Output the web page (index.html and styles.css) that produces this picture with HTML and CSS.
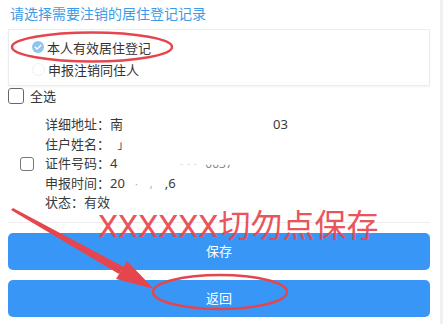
FILE: index.html
```html
<!DOCTYPE html>
<html lang="zh-CN">
<head>
  <meta charset="UTF-8" />
  <title>注销居住登记</title>
  <meta name="viewport" content="width=device-width, initial-scale=1.0"/>
  <link rel="stylesheet" href="styles.css">
</head>
<body>
  <div class="screen">
    <div class="page">

      <!-- Title -->
      <div class="page-title">请选择需要注销的居住登记记录</div>

      <!-- Options -->
      <div class="options">
        <div class="option">
          <span class="radio checked">
            <svg viewBox="0 0 12 12" width="12" height="12"><circle cx="6" cy="6" r="6" fill="#8fc4ef"/><path d="M3.2 6.2 L5.2 8.1 L8.9 4.2" fill="none" stroke="#fff" stroke-width="1.4" stroke-linecap="round" stroke-linejoin="round"/></svg>
          </span>
          本人有效居住登记
        </div>
        <div class="option">
          <span class="radio"></span>
          申报注销同住人
        </div>
      </div>

      <!-- Select all -->
      <label class="select-all">
        <span class="checkbox"></span>
        全选
      </label>

      <!-- Record -->
      <div class="record">
        <span class="checkbox small"></span>
        <div class="record-info">
          <div>详细地址：南<span class="gap-a">03</span></div>
          <div>住户姓名：<span class="mark-a">」</span></div>
          <div>证件号码：4<span class="ghost g1">- - -</span><span class="ghost g2">0037</span></div>
          <div>申报时间：20<span class="dot d1">·</span><span class="dot d2">,</span><span class="d3">,6</span></div>
          <div>状态：有效</div>
        </div>
      </div>

      <!-- Buttons -->
      <div class="actions">
        <button class="btn">保存</button>
        <button class="btn">返回</button>
      </div>
    </div>
    <div class="scroll-track"></div>

    <!-- Annotations -->
    <svg class="marks" width="443" height="324" viewBox="0 0 443 324">
      <ellipse cx="92" cy="47" rx="80" ry="14.5" fill="none" stroke="#e5464e" stroke-width="2.5"/>
      <ellipse cx="220" cy="292" rx="67" ry="17" fill="none" stroke="#e5464e" stroke-width="2.5"/>
      <polygon points="11,210 13,208 124,267 119,274" fill="#e5464e"/>
      <polygon points="154,289 116,279 127,261" fill="#e5464e"/>
    </svg>
    <div class="warn">XXXXXX切勿点保存</div>
  </div>
</body>
</html>
```
FILE: styles.css
```css
body {
  margin: 0; background: #fff;
  font-family: "Noto Sans", "Noto Sans CJK SC", sans-serif;
  color: #333;
}
.screen {
  position: relative; width: 443px; height: 324px;
  display: flex; overflow: hidden;
}
.page { flex: 1; padding: 4px 10px 0 8px; }
.scroll-track { width: 3px; background: #f0f0f0; }

.page-title {
  font-size: 14px; line-height: 20px; color: #3d9be8; padding-left: 2px;
}

.options {
  margin-top: 5px; height: 45px;
  border: 1px solid #ececec; box-shadow: 0 1px 2px rgba(0,0,0,0.05);
  padding: 6px 0 4px 23px;
}
.option {
  display: flex; align-items: center; gap: 3px;
  height: 22px; font-size: 13px; color: #333;
}
.radio {
  width: 11px; height: 11px; border-radius: 50%;
  border: 1px solid #f1f1f1; display: inline-block;
}
.radio.checked { border: none; width: 12px; height: 12px; }
.radio svg { display: block; }

.select-all {
  display: flex; align-items: center; gap: 6px;
  margin-top: 1px; height: 17px; font-size: 13px; color: #333;
}
.checkbox {
  width: 14px; height: 14px; border: 1.5px solid #666; border-radius: 3px;
  display: inline-block;
}
.checkbox.small { width: 12px; height: 12px; border-color: #777; }

.record {
  display: flex; align-items: center; gap: 11px;
  padding: 9px 0 9px 12px; border-bottom: 1px solid #eee;
  margin-top: 2px;
}
.record-info { font-size: 13px; line-height: 19.5px; color: #3a3a3a; }
.gap-a { margin-left: 150px; }
.mark-a { margin-left: 14px; font-size: 11px; }
.ghost {
  display: inline-block; color: #888; font-size: 12px;
  clip-path: inset(55% 0 0 0);
}
.g1 { margin-left: 62px; }
.g2 { margin-left: 8px; }
.dot { color: #aaa; font-size: 11px; }
.d1 { margin-left: 10px; }
.d2 { margin-left: 12px; }
.d3 { margin-left: 12px; }

.actions {
  display: flex; flex-direction: column; gap: 10px; margin-top: 10px;
}
.btn {
  height: 37px; border: none; border-radius: 5px;
  background: #3897f6; color: #fff;
  font-family: "Noto Sans CJK SC", sans-serif; font-size: 13px; line-height: 14px;
}

.marks { position: absolute; left: 0; top: 0; pointer-events: none; }
.warn {
  position: absolute; left: 98px; top: 211px;
  font-family: Roboto, "Noto Sans CJK SC", sans-serif; font-size: 32px; line-height: 30px;
  color: #e9474f; opacity: 0.92; white-space: nowrap; pointer-events: none;
}
```
